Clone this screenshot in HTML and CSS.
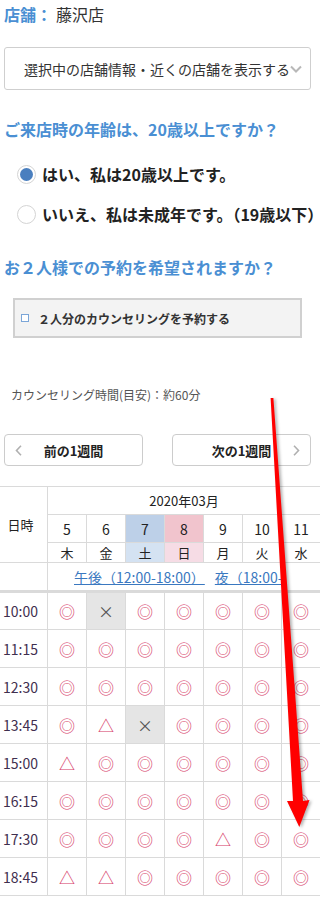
FILE: index.html
```html
<!DOCTYPE html>
<html lang="ja">
<head>
<meta charset="utf-8">
<title>予約カレンダー</title>
<link rel="stylesheet" href="styles.css">
</head>
<body>
<div class="page">
  <div class="content">
    <p class="store"><span class="store-label">店舗：</span><span class="store-name">藤沢店</span></p>
    <div class="select"><span class="select-text">選択中の店舗情報・近くの店舗を表示する</span><svg class="select-chev" width="12" height="8" viewBox="0 0 12 8"><polyline points="1,1.5 6,6.5 11,1.5" fill="none" stroke="#b8b8b8" stroke-width="2"/></svg></div>
    <h2 class="q q-age">ご来店時の年齢は、20歳以上ですか？</h2>
    <div class="radio radio-first"><span class="radio-mark checked"></span><span class="radio-text">はい、私は20歳以上です。</span></div>
    <div class="radio"><span class="radio-mark"></span><span class="radio-text">いいえ、私は未成年です。（19歳以下）</span></div>
    <h2 class="q q-pair">お２人様での予約を希望されますか？</h2>
    <div class="pair-box"><span class="check"></span><span class="pair-text">２人分のカウンセリングを予約する</span></div>
    <p class="duration">カウンセリング時間(目安)：約60分</p>
    <div class="weeknav">
      <button class="weekbtn"><svg class="chev-l" width="7" height="11" viewBox="0 0 7 11"><polyline points="6,0.8 1.5,5.5 6,10.2" fill="none" stroke="#b0b0b0" stroke-width="1.6"/></svg><span class="wb-text">前の1週間</span></button>
      <button class="weekbtn"><span class="wb-text">次の1週間</span><svg class="chev-r" width="7" height="11" viewBox="0 0 7 11"><polyline points="1,0.8 5.5,5.5 1,10.2" fill="none" stroke="#b0b0b0" stroke-width="1.6"/></svg></button>
    </div>
  </div>

  <div class="cal">
    <div class="cal-head">
      <div class="c-dt">日時</div>
      <div class="c-month">2020年03月</div>
      <div class="c-date">5</div>
      <div class="c-date">6</div>
      <div class="c-date sat">7</div>
      <div class="c-date sun">8</div>
      <div class="c-date">9</div>
      <div class="c-date">10</div>
      <div class="c-date">11</div>
      <div class="c-wd">木</div>
      <div class="c-wd">金</div>
      <div class="c-wd sat-l">土</div>
      <div class="c-wd sun-l">日</div>
      <div class="c-wd">月</div>
      <div class="c-wd">火</div>
      <div class="c-wd">水</div>
      <div class="c-blank"></div>
      <div class="c-period"><a class="p-link" href="#">午後（12:00-18:00）</a><a class="p-link p-night" href="#">夜（18:00-</a></div>
    </div>
    <div class="cal-body">
      <div class="c-time">10:00</div>
      <div class="c-slot ok">◎</div><div class="c-slot full">×</div><div class="c-slot ok">◎</div><div class="c-slot ok">◎</div><div class="c-slot ok">◎</div><div class="c-slot ok">◎</div><div class="c-slot ok">◎</div>
      <div class="c-time">11:15</div>
      <div class="c-slot ok">◎</div><div class="c-slot ok">◎</div><div class="c-slot ok">◎</div><div class="c-slot ok">◎</div><div class="c-slot ok">◎</div><div class="c-slot ok">◎</div><div class="c-slot ok">◎</div>
      <div class="c-time">12:30</div>
      <div class="c-slot ok">◎</div><div class="c-slot ok">◎</div><div class="c-slot ok">◎</div><div class="c-slot ok">◎</div><div class="c-slot ok">◎</div><div class="c-slot ok">◎</div><div class="c-slot ok">◎</div>
      <div class="c-time">13:45</div>
      <div class="c-slot ok">◎</div><div class="c-slot few">△</div><div class="c-slot full">×</div><div class="c-slot ok">◎</div><div class="c-slot ok">◎</div><div class="c-slot ok">◎</div><div class="c-slot ok">◎</div>
      <div class="c-time">15:00</div>
      <div class="c-slot few">△</div><div class="c-slot ok">◎</div><div class="c-slot ok">◎</div><div class="c-slot ok">◎</div><div class="c-slot ok">◎</div><div class="c-slot ok">◎</div><div class="c-slot ok">◎</div>
      <div class="c-time">16:15</div>
      <div class="c-slot ok">◎</div><div class="c-slot ok">◎</div><div class="c-slot ok">◎</div><div class="c-slot ok">◎</div><div class="c-slot ok">◎</div><div class="c-slot ok">◎</div><div class="c-slot ok">◎</div>
      <div class="c-time">17:30</div>
      <div class="c-slot ok">◎</div><div class="c-slot ok">◎</div><div class="c-slot ok">◎</div><div class="c-slot ok">◎</div><div class="c-slot few">△</div><div class="c-slot ok">◎</div><div class="c-slot ok">◎</div>
      <div class="c-time">18:45</div>
      <div class="c-slot few">△</div><div class="c-slot few">△</div><div class="c-slot ok">◎</div><div class="c-slot ok">◎</div><div class="c-slot ok">◎</div><div class="c-slot ok">◎</div><div class="c-slot ok">◎</div>
    </div>
  </div>

  <svg class="arrow" width="320" height="898" viewBox="0 0 320 898">
    <polygon points="270.6,398 273.4,398 303,801 309.5,800 299.3,827 287,801 293,801" fill="#ff0000"/>
  </svg>
</div>
</body>
</html>
```

FILE: styles.css
```css
* {
  box-sizing: border-box;
  margin: 0;
  padding: 0;
}

html, body {
  background: #fff;
}

body {
  font-family: "Noto Sans CJK JP", "Noto Sans", sans-serif;
  color: #333;
  width: 320px;
  overflow-x: hidden;
}

.page {
  position: relative;
  width: 320px;
  overflow: hidden;
}

.content {
  padding: 0 9px 0 4px;
}

.store {
  padding-top: 4px;
  height: 25px;
  font-size: 16px;
  line-height: 21px;
  white-space: nowrap;
}

.store-label {
  color: #4a8fd3;
  font-weight: bold;
}

.store-name {
  margin-left: 4px;
}

.select {
  margin-top: 22px;
  height: 43px;
  border: 1px solid #cfcfcf;
  border-radius: 3px;
  display: flex;
  align-items: center;
  padding: 0 8px 0 19px;
  font-size: 14px;
  white-space: nowrap;
  color: #333;
}

.select-chev {
  margin-left: auto;
  flex: none;
}

.q {
  font-size: 16px;
  line-height: 24px;
  color: #4a8fd3;
  font-weight: bold;
  white-space: nowrap;
}

.q-age {
  margin-top: 27px;
}

.q-pair {
  margin-top: 29px;
}

.radio {
  display: flex;
  align-items: center;
  height: 24px;
  white-space: nowrap;
  font-size: 16px;
  font-weight: bold;
  color: #222;
}

.radio-first {
  margin-top: 21px;
}

.radio + .radio {
  margin-top: 16px;
}

.radio-mark {
  flex: none;
  width: 19px;
  height: 19px;
  margin: 0 6px 0 13px;
  border: 1px solid #d4d4d4;
  border-radius: 50%;
  background: #fff;
  display: flex;
  align-items: center;
  justify-content: center;
}

.radio-mark.checked::after {
  content: "";
  width: 13px;
  height: 13px;
  border-radius: 50%;
  background: #4a7fbf;
}

.pair-box {
  margin: 19px 0 0 9px;
  width: 289px;
  height: 40px;
  border: 2px solid #d0d0d0;
  background: #f3f3f3;
  display: flex;
  align-items: center;
  padding-left: 6px;
  font-size: 12px;
  font-weight: bold;
  color: #333;
  white-space: nowrap;
}

.check {
  flex: none;
  width: 8px;
  height: 8px;
  border: 1px solid #7ba6d8;
  background: #fff;
  margin-right: 9px;
}

.duration {
  margin-top: 48px;
  padding-left: 7px;
  font-size: 12px;
  line-height: 18px;
  color: #555;
  white-space: nowrap;
}

.weeknav {
  margin-top: 30px;
  display: flex;
  justify-content: space-between;
}

.weekbtn {
  width: 139px;
  height: 32px;
  border: 1px solid #cccccc;
  border-radius: 4px;
  background: #fff;
  display: grid;
  grid-template-columns: 10px 1fr 10px;
  align-items: center;
  padding: 0 10px;
  font-family: "Noto Sans CJK JP", "Noto Sans", sans-serif;
  font-size: 13px;
  font-weight: bold;
  color: #222;
}

.wb-text {
  grid-column: 2;
  grid-row: 1;
  text-align: center;
}

.chev-l {
  grid-column: 1;
  grid-row: 1;
}

.chev-r {
  grid-column: 3;
  grid-row: 1;
  justify-self: end;
}

/* calendar */
.cal {
  margin-top: 20px;
}

.cal-head,
.cal-body {
  display: grid;
  grid-template-columns: 47px repeat(7, 38px);
  gap: 1px;
  background: #dadada;
}

.cal-head {
  grid-template-rows: 27px 27px 19px 27px;
  padding-top: 1px;
}

.cal-body {
  grid-template-rows: 36px repeat(7, 37px);
  padding: 3px 0 1px;
}

.cal-head > div,
.cal-body > div {
  background: #fff;
  display: flex;
  align-items: center;
  justify-content: center;
  white-space: nowrap;
}

.c-dt {
  grid-row: 1 / 4;
  font-size: 13px;
  padding-right: 6px;
  color: #222;
}

.c-month {
  grid-column: 2 / 9;
  font-size: 13px;
  color: #222;
}

.c-date {
  font-size: 14px;
  color: #222;
}

.c-wd {
  font-size: 13px;
  color: #222;
}

.cal-head > .sat { background: #bdd0e8; }
.cal-head > .sun { background: #f1c4cd; }
.cal-head > .sat-l { background: #d4e2f2; }
.cal-head > .sun-l { background: #f6dce5; }

.cal-head > .c-period {
  grid-column: 2 / 9;
  justify-content: flex-start;
  padding-left: 26px;
  font-size: 14px;
  overflow: hidden;
}

.p-link {
  color: #3a78c0;
  text-decoration: underline;
}

.p-night {
  margin-left: 10px;
}

.c-time {
  font-size: 14px;
  color: #3f2f4f;
  padding-right: 6px;
}

.c-slot {
  font-size: 16px;
}

.c-slot.ok,
.c-slot.few {
  color: #d63a66;
}

.cal-body > .c-slot.full {
  background: #e5e5e5;
  color: #555;
}

.arrow {
  position: absolute;
  left: 0;
  top: 0;
  pointer-events: none;
  filter: drop-shadow(2px 1px 1.5px rgba(0, 0, 0, 0.3));
}
```
